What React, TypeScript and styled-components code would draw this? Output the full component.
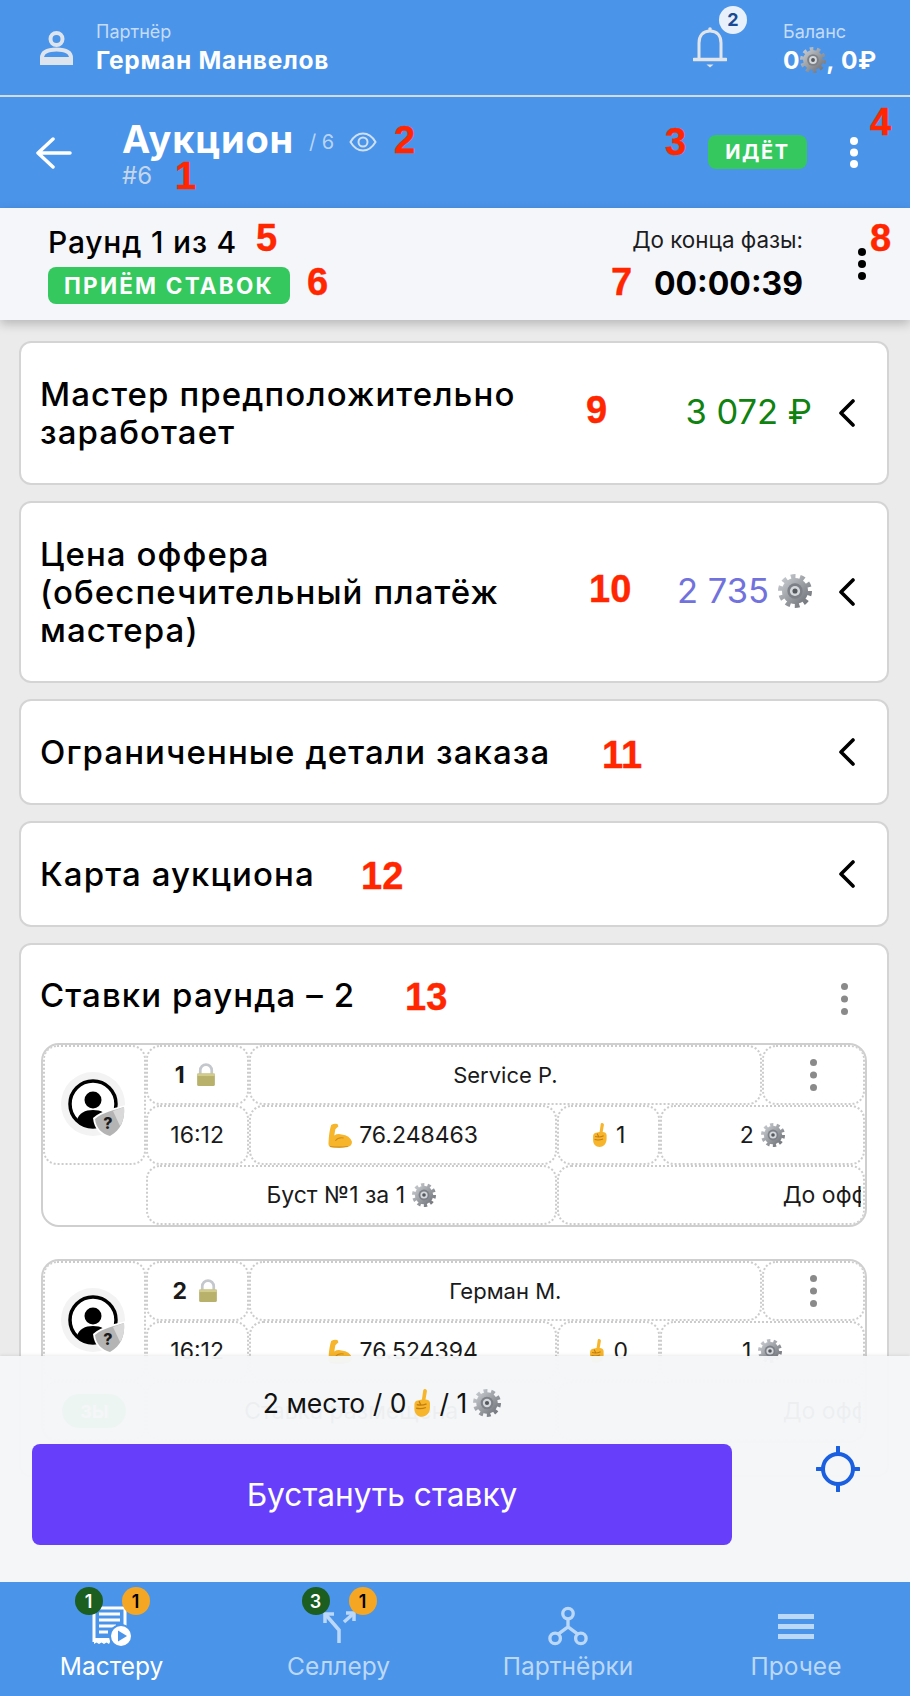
import React from "react";
import styled, { createGlobalStyle } from "styled-components";

const GlobalStyle = createGlobalStyle`
  html, body {
    margin: 0;
    padding: 0;
    background: #ffffff;
    font-family: Inter, "Noto Sans", sans-serif;
  }
`;

const Page = styled.div`
  position: relative;
  width: 910px;
  height: 1696px;
  display: flex;
  flex-direction: column;
  overflow: hidden;
  background: #ebebeb;
`;

const TopBar = styled.header`
  height: 95px;
  flex: none;
  background: #4a94e9;
  display: flex;
  align-items: center;
  padding: 0 33px 0 40px;
  gap: 23px;
`;

const TopText = styled.div<{ $grow?: boolean }>`
  display: flex;
  flex-direction: column;
  gap: 2px;
  ${(p) => (p.$grow ? "flex: 1;" : "")}
`;

const TopLabel = styled.div`
  font-size: 18px;
  line-height: 22px;
  color: #c5dcf7;
`;

const TopValue = styled.div`
  font-size: 24.500px;
  line-height: 30px;
  font-weight: 700;
  letter-spacing: 0.7px;
  color: #ffffff;
  display: flex;
  align-items: center;
`;

const BellWrap = styled.div`
  position: relative;
  width: 34px;
  height: 42px;
  margin: 0 33px 0 0;
  top: -1px;
`;

const BellBadge = styled.div`
  position: absolute;
  left: 26px;
  top: -20px;
  width: 28px;
  height: 28px;
  border-radius: 50%;
  background: #e8f1fb;
  color: #1a4a94;
  font-size: 18px;
  font-weight: 700;
  display: flex;
  align-items: center;
  justify-content: center;
`;

const SubHeader = styled.div`
  flex: none;
  border-top: 2px solid #d3dbe6;
  background: #4a94e9;
  display: flex;
  align-items: center;
  padding: 0 52px 0 36px;
  box-sizing: border-box;
  height: 113px;
`;

const TitleBlock = styled.div`
  flex: 1;
  margin-left: 50px;
  margin-top: -2px;
`;

const TitleRow = styled.div`
  display: flex;
  align-items: center;
  gap: 15px;
  height: 48px;
`;

const Title = styled.h1`
  margin: 0;
  font-size: 38px;
  line-height: 44px;
  font-weight: 700;
  letter-spacing: 0.8px;
  color: #ffffff;
`;

const Viewers = styled.div`
  display: flex;
  align-items: center;
  gap: 15px;
  margin-top: 6px;
  font-size: 20px;
  color: #b9d4f5;
`;

const OrderNo = styled.div`
  font-size: 24px;
  line-height: 26px;
  color: #c5d6ea;
`;

const StatusPill = styled.div<{ $big?: boolean }>`
  background: #34c85f;
  color: #ffffff;
  font-weight: 700;
  border-radius: 8px;
  display: inline-flex;
  align-items: center;
  justify-content: center;
  ${(p) =>
    p.$big
      ? "width: 242px; height: 37px; font-size: 22.5px; letter-spacing: 2.2px;"
      : "width: 99px; height: 34px; font-size: 20px; letter-spacing: 1.6px; margin: 0 43px 0 0; position: relative; top: -1px;"}
`;

const Dots = styled.svg`
  flex: none;
  display: block;
`;

const RoundBar = styled.div`
  height: 112px;
  flex: none;
  box-sizing: border-box;
  background: #f4f6fa;
  box-shadow: 0 4px 10px rgba(0, 0, 0, 0.22);
  display: flex;
  align-items: center;
  padding: 0 44px 0 48px;
  position: relative;
  z-index: 1;
`;

const RoundInfo = styled.div`
  flex: 1;
  display: flex;
  flex-direction: column;
  gap: 6px;
  align-items: flex-start;
  margin-top: -1px;
`;

const RoundTitle = styled.div`
  font-size: 30px;
  line-height: 38px;
  font-weight: 500;
  letter-spacing: 0.8px;
  color: #000000;
`;

const Timer = styled.div`
  display: flex;
  flex-direction: column;
  align-items: flex-end;
  gap: 13px;
  margin-right: 55px;
`;

const TimerLabel = styled.div`
  font-size: 22.400px;
  line-height: 26px;
  color: #1c1c1e;
`;

const TimerValue = styled.div`
  font-size: 32px;
  line-height: 36px;
  font-weight: 700;
  color: #000000;
`;

const Content = styled.main`
  flex: 1;
  overflow: hidden;
  padding: 21px 21px 0 19px;
  display: flex;
  flex-direction: column;
  gap: 16px;
`;

const Card = styled.section`
  flex: none;
  box-sizing: border-box;
  background: #ffffff;
  border: 2px solid #d4d4d4;
  border-radius: 12px;
  padding: 32px 32px 32px 19px;
  display: flex;
  align-items: center;
`;

const CardTitle = styled.div`
  flex: 1;
  font-size: 33px;
  line-height: 38px;
  font-weight: 500;
  letter-spacing: 1.1px;
  color: #000000;
`;

const CardValue = styled.div<{ $color: string }>`
  display: flex;
  align-items: center;
  gap: 9px;
  font-size: 34.500px;
  color: ${(p) => p.$color};
  margin: -3px 26px 0 0;
`;

const BidsCard = styled(Card)`
  display: block;
  padding: 30px 20px 0 19px;
`;

const BidsHead = styled.div`
  display: flex;
  align-items: center;
  justify-content: space-between;
  padding-right: 19px;
  margin-bottom: 28px;
`;

const HeadDots = styled.div`
  margin-top: 8px;
`;

const Bid = styled.div`
  box-sizing: border-box;
  width: 826px;
  margin-left: 1px;
  height: 184px;
  margin-bottom: 32px;
  border: 2px solid #cfcfcf;
  border-radius: 18px;
  display: grid;
  grid-template-columns: repeat(8, 1fr);
  grid-auto-rows: 60px;
  overflow: hidden;
`;

const Cell = styled.div<{ $span: number; $start?: number; $bold?: boolean; $clip?: boolean }>`
  grid-column: ${(p) => (p.$start ? `${p.$start} / span ${p.$span}` : `span ${p.$span}`)};
  box-sizing: border-box;
  border: 2px dotted #cccccc;
  border-radius: 14px;
  display: flex;
  align-items: center;
  justify-content: ${(p) => (p.$clip ? "flex-start" : "center")};
  gap: ${(p) => (p.$bold ? "11px" : "7px")};
  font-size: 23px;
  font-weight: ${(p) => (p.$bold ? 700 : 400)};
  color: #1a1a1a;
  white-space: nowrap;
  overflow: hidden;
  padding-left: ${(p) => (p.$clip ? "224px" : "0")};
  padding-right: ${(p) => (p.$bold ? "4px" : "0")};
`;

const NameCell = styled(Cell)`
  font-size: 22px;
`;

const Clip = styled.span`
  display: block;
  flex: none;
  width: 78px;
  overflow: hidden;
`;

const AvatarCell = styled(Cell)`
  grid-row: span 2;
  height: 120px;
`;

const SentPill = styled.div`
  width: 64px;
  height: 34px;
  border-radius: 17px;
  background: #34c85f;
  color: #ffffff;
  font-size: 18px;
  font-weight: 700;
  display: flex;
  align-items: center;
  justify-content: center;
`;

const BoostPanel = styled.div`
  position: absolute;
  left: 0;
  right: 0;
  bottom: 114px;
  height: 226px;
  background: rgba(244, 246, 248, 0.97);
  box-shadow: 0 -1px 3px rgba(0, 0, 0, 0.08);
  z-index: 2;
  box-sizing: border-box;
  padding: 30px 50px 0 32px;
`;

const BoostSummary = styled.div`
  width: 700px;
  height: 34px;
  display: flex;
  align-items: center;
  justify-content: center;
  gap: 6px;
  font-size: 26.500px;
  color: #111111;
`;

const BoostRow = styled.div`
  display: flex;
  align-items: flex-start;
  justify-content: space-between;
  margin-top: 24px;
`;

const BoostButton = styled.button`
  width: 700px;
  height: 101px;
  border: 0;
  border-radius: 8px;
  background: #673ffb;
  color: #ffffff;
  font-family: inherit;
  font-size: 31.700px;
`;

const TabBar = styled.nav`
  height: 114px;
  flex: none;
  background: #4a94e9;
  display: grid;
  grid-template-columns: 223px 231px 228px 1fr;
  position: relative;
  z-index: 3;
`;

const Tab = styled.div<{ $active?: boolean }>`
  position: relative;
  display: flex;
  flex-direction: column;
  align-items: center;
  font-size: 24.500px;
  color: ${(p) => (p.$active ? "#ffffff" : "#bcd8f8")};
`;

const TabIcon = styled.div`
  height: 44px;
  margin-top: 22px;
  margin-bottom: 3px;
  display: flex;
  align-items: center;
  justify-content: center;
`;

const TabBadge = styled.div<{ $kind: "green" | "orange" }>`
  position: absolute;
  top: 5px;
  left: ${(p) => (p.$kind === "green" ? "calc(50% - 37px)" : "calc(50% + 10px)")};
  width: 28px;
  height: 28px;
  border-radius: 50%;
  background: ${(p) => (p.$kind === "green" ? "#1b5e20" : "#f5a623")};
  color: ${(p) => (p.$kind === "green" ? "#ffffff" : "#000000")};
  font-size: 18px;
  font-weight: 600;
  display: flex;
  align-items: center;
  justify-content: center;
`;

const Mark = styled.div<{ $x: number; $y: number }>`
  position: absolute;
  left: ${(p) => p.$x}px;
  top: ${(p) => p.$y}px;
  z-index: 5;
  font-family: "Liberation Sans", Arial, sans-serif;
  font-size: 38px;
  line-height: 44px;
  font-weight: 700;
  color: #ff2600;
  -webkit-text-stroke: 0.4px #ff2600;
`;

function Gear({ size = 24 }: { size?: number }) {
  const id = `gear-${size}`;
  return (
    <svg width={size} height={size} viewBox="0 0 24 24" style={{ flex: "none" }}>
      <defs>
        <linearGradient id={id} x1="0" y1="0" x2="1" y2="1">
          <stop offset="0" stopColor="#c9ccd0" />
          <stop offset="1" stopColor="#6e7278" />
        </linearGradient>
      </defs>
      <circle cx="12" cy="12" r="10" fill="none" stroke={`url(#${id})`} strokeWidth="4" strokeDasharray="3.2 3.08" />
      <circle cx="12" cy="12" r="9.2" fill={`url(#${id})`} />
      <circle cx="12" cy="12" r="5.4" fill="#7d8187" />
      <circle cx="12" cy="12" r="3.6" fill="#d5d8dc" />
      <circle cx="12" cy="12" r="1.8" fill="#54575c" />
    </svg>
  );
}

function Finger({ size = 26 }: { size?: number }) {
  return (
    <svg width={size * 0.7} height={size} viewBox="0 0 18 26" style={{ flex: "none" }}>
      <path
        d="M10.500 1C12 .5 13 1.800 12.800 3L11.600 10C13.500 10 15.500 11 15.500 13L15.500 17C15.500 22 12 25 8.500 25C4.500 25 2 22 2 18L2 14C2 12 3.500 11 5 10.800L8.500 10L9.500 3C9.600 2 9.800 1.300 10.500 1z"
        fill="#f7b52c"
      />
      <path d="M4 14.500c3 .8 6 .4 8.500-.8M3.500 17.500c3 .8 6 .4 8.500-.6M6 11.500l1.500 3" stroke="#c27d12" strokeWidth="1.100" fill="none" />
    </svg>
  );
}

function Muscle({ size = 25 }: { size?: number }) {
  return (
    <svg width={size} height={size} viewBox="0 0 24 24" style={{ flex: "none" }}>
      <path
        d="M4 2Q7 0 10 1L11 3L9 5L8 6L7 12Q10 10 14 11Q22 12 24 18Q24 23 18 23Q8 24 3 23Q1 22 1.500 18Q2 8 4 2z"
        fill="#f7b52c"
      />
      <path d="M8 17c2-2.500 5-3.200 8-2.500M3 22.500c5 .8 12 .8 17 0" stroke="#cf8d1a" strokeWidth="1" fill="none" />
    </svg>
  );
}

function Lock() {
  return (
    <svg width={20} height={24} viewBox="0 0 19 23" style={{ flex: "none" }}>
      <path d="M4 11V7a5.500 5.500 0 0 1 11 0v4" fill="none" stroke="#c4c8cd" strokeWidth="2.600" />
      <rect x="1" y="10" width="17" height="12" rx="1.500" fill="#b7b16c" />
      <rect x="1" y="10" width="17" height="2.500" fill="#d1cc8d" />
    </svg>
  );
}

function Avatar() {
  return (
    <svg width="66" height="66" viewBox="0 0 66 66">
      <circle cx="32" cy="32" r="32" fill="#f3f3f3" />
      <circle cx="32" cy="32" r="23" fill="#ffffff" stroke="#000000" strokeWidth="3.500" />
      <circle cx="32" cy="28" r="8.500" fill="#000000" />
      <path d="M16 48c2-7 8-10 16-10s14 3 16 10c-8 8-24 8-32 0z" fill="#000000" />
      <path d="M32 46C41 38 54 36 65 33C66 48 62 60 49 66C40 64 33 57 32 46z" fill="#ffffff" />
      <path d="M34 47C42 40 54 38 63 35C64 48 60 58 49 64C41 62 35 56 34 47z" fill="#b4b4b4" />
      <path d="M52 39L63 35C64 42 62 50 59 54z" fill="#d9d9d9" />
      <text x="47" y="57" fontFamily="Inter, sans-serif" fontSize="16" fontWeight="800" textAnchor="middle" fill="#1c1c1c">
        ?
      </text>
    </svg>
  );
}

function DotsIcon({ color, h = 32, r = 3.500 }: { color: string; h?: number; r?: number }) {
  return (
    <Dots width={r * 2} height={h} viewBox={`0 0 ${r * 2} ${h}`}>
      <circle cx={r} cy={r} r={r} fill={color} />
      <circle cx={r} cy={h / 2} r={r} fill={color} />
      <circle cx={r} cy={h - r} r={r} fill={color} />
    </Dots>
  );
}

function Chevron() {
  return (
    <svg width="17" height="28" viewBox="0 0 17 28" style={{ flex: "none" }}>
      <path d="M15 2 3 14l12 12" fill="none" stroke="#000000" strokeWidth="3.600" strokeLinecap="round" strokeLinejoin="round" />
    </svg>
  );
}

function BidCard(props: { place: string; name: string; time: string; power: string; taps: string; coins: string; boost?: string; sent?: boolean }) {
  return (
    <Bid>
      <AvatarCell $span={1}>
        <Avatar />
      </AvatarCell>
      <Cell $span={1} $bold>
        {props.place} <Lock />
      </Cell>
      <NameCell $span={5}>{props.name}</NameCell>
      <Cell $span={1}>
        <DotsIcon color="#8a8a8a" />
      </Cell>
      <Cell $span={1}>{props.time}</Cell>
      <Cell $span={3}>
        <Muscle /> {props.power}
      </Cell>
      <Cell $span={1}>
        <Finger /> {props.taps}
      </Cell>
      <Cell $span={2}>
        {props.coins} <Gear size={24} />
      </Cell>
      {props.sent ? (
        <>
          <Cell $span={1}>
            <SentPill>ЗЫ</SentPill>
          </Cell>
          <Cell $span={4}>Ставка размещена</Cell>
        </>
      ) : (
        <Cell $span={4} $start={2}>
          {props.boost} <Gear size={24} />
        </Cell>
      )}
      <Cell $span={3} $clip>
        <Clip>До оффера</Clip>
      </Cell>
    </Bid>
  );
}

export default function App() {
  return (
    <Page>
      <GlobalStyle />
      <TopBar>
        <svg width="33" height="34" viewBox="0 0 33 34" fill="none" stroke="#dde4ee" strokeWidth="4">
          <circle cx="16.500" cy="8" r="6" />
          <path d="M2 27c0-6 6-8.500 14.500-8.500S31 21 31 27v5H2z" />
          <path d="M2 28.500h29" strokeWidth="5" />
        </svg>
        <TopText $grow>
          <TopLabel>Партнёр</TopLabel>
          <TopValue>Герман Манвелов</TopValue>
        </TopText>
        <BellWrap>
          <svg width="34" height="42" viewBox="0 0 34 42" fill="none" stroke="#e1e4e8" strokeWidth="3">
            <path d="M6 33V17C6 9.500 10 5 17 5s11 4.500 11 12v16" />
            <path d="M1 33.500h32" strokeLinecap="round" strokeWidth="3.500" />
            <circle cx="17" cy="3" r="1.800" fill="#e1e4e8" stroke="none" />
            <path d="M13.500 38.500h7l-3.500 3z" fill="#e1e4e8" stroke="none" />
          </svg>
          <BellBadge>2</BellBadge>
        </BellWrap>
        <TopText>
          <TopLabel>Баланс</TopLabel>
          <TopValue>
            0<Gear size={26} />, 0₽
          </TopValue>
        </TopText>
      </TopBar>

      <SubHeader>
        <svg width="36" height="32" viewBox="0 0 36 32" fill="none" stroke="#ffffff" strokeWidth="3.500" strokeLinecap="round" strokeLinejoin="round">
          <path d="M17 2 2 16l15 14M3 16h31" />
        </svg>
        <TitleBlock>
          <TitleRow>
            <Title>Аукцион</Title>
            <Viewers>
              / 6
              <svg width="28" height="22" viewBox="0 0 28 22" fill="none" stroke="#cfe0f5" strokeWidth="2">
                <path d="M1.500 11C5 5 9 2.500 14 2.500S23 5 26.500 11C23 17 19 19.500 14 19.500S5 17 1.500 11z" />
                <circle cx="14" cy="11" r="4.500" />
              </svg>
            </Viewers>
          </TitleRow>
          <OrderNo>#6</OrderNo>
        </TitleBlock>
        <StatusPill>ИДЁТ</StatusPill>
        <DotsIcon color="#ffffff" h={31} r={4} />
      </SubHeader>

      <RoundBar>
        <RoundInfo>
          <RoundTitle>Раунд 1 из 4</RoundTitle>
          <StatusPill $big>ПРИЁМ СТАВОК</StatusPill>
        </RoundInfo>
        <Timer>
          <TimerLabel>До конца фазы:</TimerLabel>
          <TimerValue>00:00:39</TimerValue>
        </Timer>
        <DotsIcon color="#000000" h={32} r={4} />
      </RoundBar>

      <Content>
        <Card>
          <CardTitle>
            Мастер предположительно
            <br />
            заработает
          </CardTitle>
          <CardValue $color="#0f820f">3 072 ₽</CardValue>
          <Chevron />
        </Card>
        <Card>
          <CardTitle>
            Цена оффера
            <br />
            (обеспечительный платёж
            <br />
            мастера)
          </CardTitle>
          <CardValue $color="#7272dd">
            2 735 <Gear size={34} />
          </CardValue>
          <Chevron />
        </Card>
        <Card>
          <CardTitle>Ограниченные детали заказа</CardTitle>
          <Chevron />
        </Card>
        <Card>
          <CardTitle>Карта аукциона</CardTitle>
          <Chevron />
        </Card>
        <BidsCard>
          <BidsHead>
            <CardTitle>Ставки раунда – 2</CardTitle>
            <HeadDots>
              <DotsIcon color="#8a8a8a" />
            </HeadDots>
          </BidsHead>
          <BidCard place="1" name="Service P." time="16:12" power="76.248463" taps="1" coins="2" boost="Буст №1 за 1" />
          <BidCard place="2" name="Герман М." time="16:12" power="76.524394" taps="0" coins="1" sent />
        </BidsCard>
      </Content>

      <BoostPanel>
        <BoostSummary>
          2 место / 0<Finger size={30} /> / 1 <Gear size={28} />
        </BoostSummary>
        <BoostRow>
          <BoostButton>Бустануть ставку</BoostButton>
          <svg width="44" height="46" viewBox="0 0 44 46" fill="none" stroke="#1a5fe0" strokeWidth="4" style={{ marginTop: 2 }}>
            <circle cx="22" cy="23" r="15" />
            <path d="M22 1v7M22 38v7M1 23h6M37 23h6" strokeLinecap="round" />
          </svg>
        </BoostRow>
      </BoostPanel>

      <TabBar>
        <Tab $active>
          <TabBadge $kind="green">1</TabBadge>
          <TabBadge $kind="orange">1</TabBadge>
          <TabIcon>
            <svg width="40" height="40" viewBox="0 0 40 40">
              <path d="M2 36V2h31v24" fill="none" stroke="#ffffff" strokeWidth="3" />
              <path d="M2 34v4l2.500-1.500L7 38l2.500-1.500L12 38l2.500-1.500L17 38l1-2v-4H2z" fill="#ffffff" />
              <path d="M7 8h21M7 14h21M7 20h17M7 26h9" stroke="#ffffff" strokeWidth="3" />
              <circle cx="29" cy="30" r="12" fill="#4a94e9" />
              <circle cx="29" cy="30" r="10" fill="#ffffff" />
              <path d="M26 24.500 35 30l-9 5.500z" fill="#4a94e9" />
            </svg>
          </TabIcon>
          Мастеру
        </Tab>
        <Tab>
          <TabBadge $kind="green">3</TabBadge>
          <TabBadge $kind="orange">1</TabBadge>
          <TabIcon>
            <svg width="38" height="34" viewBox="0 0 38 34" fill="none" stroke="#bcd8f8" strokeWidth="3.500">
              <path d="M19 34V21L6 6" />
              <path d="M5 14V5h9" />
              <path d="M24 13l9-8" />
              <path d="M26 4h8v8" />
            </svg>
          </TabIcon>
          Селлеру
        </Tab>
        <Tab>
          <TabIcon>
            <svg width="40" height="40" viewBox="0 0 42 42" fill="none" stroke="#bcd8f8" strokeWidth="3.500">
              <circle cx="21" cy="8" r="5.500" />
              <circle cx="7.500" cy="34" r="5.500" />
              <circle cx="34.500" cy="34" r="5.500" />
              <path d="M21 14v8L10 30M21 22l11 8" />
            </svg>
          </TabIcon>
          Партнёрки
        </Tab>
        <Tab>
          <TabIcon>
            <svg width="36" height="25" viewBox="0 0 36 25" fill="#bcd8f8">
              <rect width="36" height="5" />
              <rect y="10" width="36" height="5" />
              <rect y="20" width="36" height="5" />
            </svg>
          </TabIcon>
          Прочее
        </Tab>
      </TabBar>

      <Mark $x={175} $y={154}>1</Mark>
      <Mark $x={394} $y={118}>2</Mark>
      <Mark $x={665} $y={120}>3</Mark>
      <Mark $x={870} $y={100}>4</Mark>
      <Mark $x={256} $y={216}>5</Mark>
      <Mark $x={307} $y={260}>6</Mark>
      <Mark $x={611} $y={260}>7</Mark>
      <Mark $x={870} $y={216}>8</Mark>
      <Mark $x={586} $y={388}>9</Mark>
      <Mark $x={589} $y={567}>10</Mark>
      <Mark $x={602} $y={733}>11</Mark>
      <Mark $x={361} $y={854}>12</Mark>
      <Mark $x={405} $y={975}>13</Mark>
    </Page>
  );
}
